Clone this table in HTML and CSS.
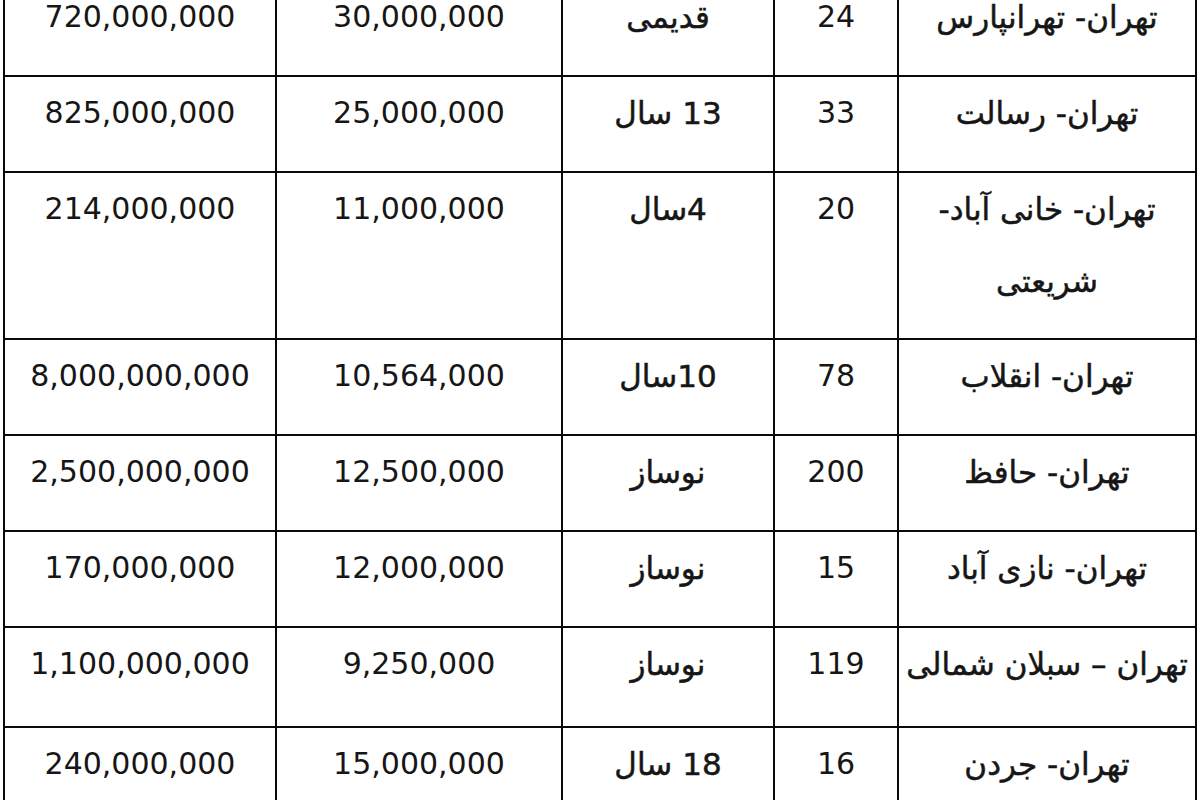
FILE: index.html
```html
<!DOCTYPE html>
<html lang="fa">
<head>
<meta charset="utf-8">
<title>جدول قیمت</title>
<link rel="stylesheet" href="styles.css">
</head>
<body>
<table class="price-table" dir="rtl">
  <colgroup>
    <col class="c-loc">
    <col class="c-area">
    <col class="c-age">
    <col class="c-meter">
    <col class="c-total">
  </colgroup>
  <tbody>
    <tr class="row">
      <td class="fa">تهران- تهرانپارس</td>
      <td class="num">24</td>
      <td class="fa">قدیمی</td>
      <td class="num">30,000,000</td>
      <td class="num">720,000,000</td>
    </tr>
    <tr class="row">
      <td class="fa">تهران- رسالت</td>
      <td class="num">33</td>
      <td class="fa">13 سال</td>
      <td class="num">25,000,000</td>
      <td class="num">825,000,000</td>
    </tr>
    <tr class="row row-tall">
      <td class="fa">تهران- خانی آباد-<br>شریعتی</td>
      <td class="num">20</td>
      <td class="fa">4سال</td>
      <td class="num">11,000,000</td>
      <td class="num">214,000,000</td>
    </tr>
    <tr class="row">
      <td class="fa">تهران- انقلاب</td>
      <td class="num">78</td>
      <td class="fa">10سال</td>
      <td class="num">10,564,000</td>
      <td class="num">8,000,000,000</td>
    </tr>
    <tr class="row">
      <td class="fa">تهران- حافظ</td>
      <td class="num">200</td>
      <td class="fa">نوساز</td>
      <td class="num">12,500,000</td>
      <td class="num">2,500,000,000</td>
    </tr>
    <tr class="row">
      <td class="fa">تهران- نازی آباد</td>
      <td class="num">15</td>
      <td class="fa">نوساز</td>
      <td class="num">12,000,000</td>
      <td class="num">170,000,000</td>
    </tr>
    <tr class="row row-mid">
      <td class="fa">تهران – سبلان شمالی</td>
      <td class="num">119</td>
      <td class="fa">نوساز</td>
      <td class="num">9,250,000</td>
      <td class="num">1,100,000,000</td>
    </tr>
    <tr class="row">
      <td class="fa">تهران- جردن</td>
      <td class="num">16</td>
      <td class="fa">18 سال</td>
      <td class="num">15,000,000</td>
      <td class="num">240,000,000</td>
    </tr>
  </tbody>
</table>
</body>
</html>
```

FILE: styles.css
```css
html, body {
  margin: 0;
  padding: 0;
  background: #ffffff;
}

body {
  overflow: hidden;
}

.price-table {
  border-collapse: collapse;
  table-layout: fixed;
  width: 1192px;
  margin: -21px 0 0 3px;
  color: #161616;
  font-family: "DejaVu Sans", sans-serif;
  font-size: 30px;
}

.c-loc { width: 298px; }
.c-area { width: 124px; }
.c-age { width: 212px; }
.c-meter { width: 286px; }
.c-total { width: 272px; }

.price-table td {
  border: 2px solid #0a0a0a;
  padding: 0;
  text-align: center;
  vertical-align: top;
  line-height: 72px;
  white-space: nowrap;
}

.row { height: 96px; }
.row-tall { height: 167px; }
.row-mid { height: 100px; }

.num {
  font-size: 30px;
}

.fa {
  font-size: 31px;
  -webkit-text-stroke: 0.5px #161616;
}
```
